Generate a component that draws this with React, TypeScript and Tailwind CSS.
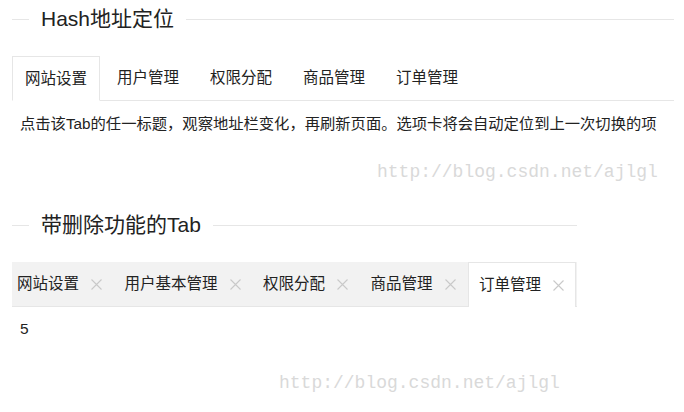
import { ReactNode } from "react";

const font = "font-['Liberation_Sans','Noto_Sans_CJK_SC',sans-serif]";

function Legend({ children }: { children: ReactNode }) {
  return (
    <div className="flex items-center h-[38px]">
      <div className="w-[17px] h-px bg-[#e6e6e6]" />
      <div className="px-[12px] text-[21px] leading-[38px] text-[#222] whitespace-nowrap">{children}</div>
      <div className="flex-1 h-px bg-[#e6e6e6]" />
    </div>
  );
}

function Close() {
  return (
    <svg width="11" height="11" viewBox="0 0 11 11" className="ml-[12px] shrink-0">
      <path d="M0.5 0.5 L10.5 10.5 M10.5 0.5 L0.5 10.5" stroke="#c9c9c9" strokeWidth="1.1" fill="none" />
    </svg>
  );
}

export default function App() {
  const hashTabs = ["网站设置", "用户管理", "权限分配", "商品管理", "订单管理"];
  const cardTabs = ["网站设置", "用户基本管理", "权限分配", "商品管理", "订单管理"];

  return (
    <div className={`relative w-[684px] h-[412px] overflow-hidden bg-white text-[#333] ${font}`}>
      <div className="pl-[12px] pr-[10px]">
        {/* Hash 定位 */}
        <Legend>Hash地址定位</Legend>

        <ul className="flex gap-[3px] mt-[18px] border-b border-[#e6e6e6]">
          {hashTabs.map((t, i) => (
            <li
              key={t}
              className={
                "shrink-0 whitespace-nowrap text-[15.5px] text-[#222] flex items-center " +
                (i === 0
                  ? "h-[45px] -mb-px px-[12px] bg-white border border-[#e6e6e6] border-b-white"
                  : "h-[44px] px-[14px]")
              }
            >
              {t}
            </li>
          ))}
        </ul>

        <p className="mt-[12px] pl-[8px] text-[15.3px] leading-[22px] text-[#222] whitespace-nowrap">
          点击该Tab的任一标题，观察地址栏变化，再刷新页面。选项卡将会自动定位到上一次切换的项
        </p>
      </div>

      {/* 带删除功能 */}
      <div className="ml-[12px] w-[565px] mt-[71px]">
        <Legend>带删除功能的Tab</Legend>

        <ul className="flex mt-[18px] h-[45px] bg-[#f2f2f2] border-b border-[#e6e6e6]">
          {cardTabs.map((t, i) => {
            const active = i === cardTabs.length - 1;
            return (
              <li
                key={t}
                className={
                  (i === 0 ? "pl-[5px] " : "pl-[10px] ") +
                  (active
                    ? "h-[45px] -mb-px pr-[11px] bg-white border-x border-t border-[#e6e6e6] "
                    : "h-[44px] pr-[12.5px] ") +
                  "shrink-0 whitespace-nowrap flex items-center text-[15.5px] text-[#222]"
                }
              >
                <span>{t}</span>
                <Close />
              </li>
            );
          })}
        </ul>

        <p className="mt-[11px] pl-[8px] text-[15.5px] leading-[22px] text-[#222]">5</p>
      </div>

      {/* 水印 */}
      <div className="absolute left-[377px] top-[161px] font-['Liberation_Mono',monospace] text-[18px] leading-[22px] text-[#d9d9d9]">
        http://blog.csdn.net/ajlgl
      </div>
      <div className="absolute left-[279px] top-[372px] font-['Liberation_Mono',monospace] text-[18px] leading-[22px] text-[#d9d9d9]">
        http://blog.csdn.net/ajlgl
      </div>
    </div>
  );
}
